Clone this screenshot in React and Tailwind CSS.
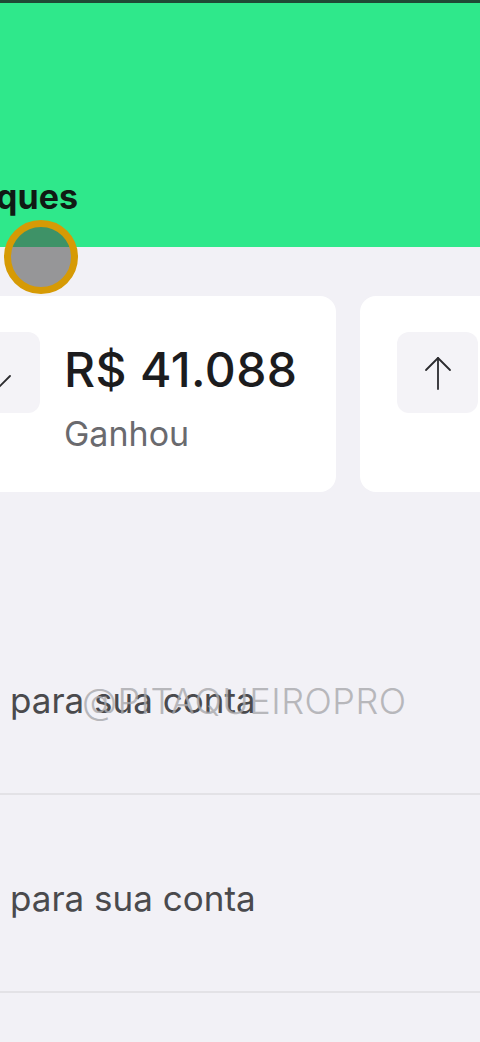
import { useState } from 'react';

const font = { fontFamily: 'Inter, "Noto Sans", sans-serif' };

function ArrowIcon({ up }) {
  return (
    <svg width="28" height="34" viewBox="0 0 28 34" fill="none" stroke="#2b2b2e" strokeWidth="1.8" strokeLinecap="round" strokeLinejoin="round" className={up ? '' : 'mr-[4px]'}>
      {up ? (
        <>
          <path d="M14 2V33" />
          <path d="M2 14L14 2L26 14" />
        </>
      ) : (
        <>
          <path d="M14 1V32" />
          <path d="M2 20L14 32L26 20" />
        </>
      )}
    </svg>
  );
}

function StatCard({ up, value, label }) {
  return (
    <div className="w-[414px] h-[196px] shrink-0 rounded-2xl bg-white pt-[36px] pl-[37px] flex">
      <div className="w-[81px] h-[81px] rounded-xl bg-[#f4f3f7] flex items-center justify-center shrink-0">
        <ArrowIcon up={up} />
      </div>
      {value && (
        <div className="ml-[24px] flex flex-col">
          <span className="text-[48px] leading-[52px] font-medium text-[#1c1c1e] mt-[12px] tracking-[0.4px]">{value}</span>
          <span className="text-[34px] leading-[40px] text-[#6a6a6e] mt-[18px]">{label}</span>
        </div>
      )}
    </div>
  );
}

function Row({ text }) {
  return (
    <div className="h-[198px] border-b-2 border-[#e3e2e6] flex items-center pl-[10px] pt-[10px]">
      <span className="text-[35px] text-[#4a4a4d] whitespace-nowrap">{text}</span>
    </div>
  );
}

export default function App() {
  const [rows] = useState(['para sua conta', 'para sua conta']);

  return (
    <div className="relative w-[480px] h-[1042px] overflow-hidden bg-[#f2f1f6]" style={font}>
      <header className="h-[247px] bg-[#2fe88b] border-t-[3px] border-[#1f4a35] flex items-end pb-[30px]">
        <div className="w-[78px] flex justify-end">
          <h1 className="text-[34px] leading-[40px] font-bold text-[#101a14] whitespace-nowrap">Destaques</h1>
        </div>
      </header>

      <div className="flex gap-[24px] ml-[-78px] mt-[49px]">
        <StatCard up={false} value="R$ 41.088" label="Ganhou" />
        <StatCard up />
      </div>

      <div className="mt-[105px]">
        {rows.map((r, i) => (
          <Row key={i} text={r} />
        ))}
      </div>

      {/* watermark */}
      <div className="absolute left-[82px] top-[674px] text-[36px] font-light tracking-[0.5px] text-[#a9a9ad] opacity-80 whitespace-nowrap">
        @PITAQUEIROPRO
      </div>

      {/* touch indicator */}
      <div className="absolute left-[4px] top-[220px] w-[74px] h-[74px] rounded-full border-[7px] border-[#d69a05] bg-[rgba(75,75,75,0.55)]" />
    </div>
  );
}
